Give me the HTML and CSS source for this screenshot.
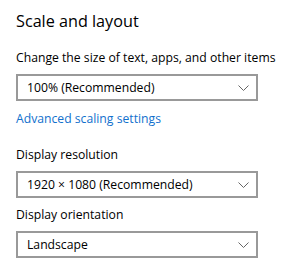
FILE: index.html
```html
<!DOCTYPE html>
<html lang="en">
<head>
  <meta charset="UTF-8">
  <title>Scale and layout</title>
  <link rel="stylesheet" href="styles.css">
</head>
<body>

  <div class="page">
    <h2 class="title">Scale and layout</h2>

    <!-- Text size -->
    <div class="field first">
      <div class="label">Change the size of text, apps, and other items</div>
      <div class="select">
        <span>100% (Recommended)</span>
        <svg class="chevron" width="11" height="6" viewBox="0 0 11 6"><path d="M0.5 0.5 L5.5 5.5 L10.5 0.5" /></svg>
      </div>
    </div>

    <a class="link" href="#">Advanced scaling settings</a>

    <!-- Resolution -->
    <div class="field second">
      <div class="label">Display resolution</div>
      <div class="select">
        <span>1920 × 1080 (Recommended)</span>
        <svg class="chevron" width="11" height="6" viewBox="0 0 11 6"><path d="M0.5 0.5 L5.5 5.5 L10.5 0.5" /></svg>
      </div>
    </div>

    <!-- Orientation -->
    <div class="field third">
      <div class="label">Display orientation</div>
      <div class="select">
        <span>Landscape</span>
        <svg class="chevron" width="11" height="6" viewBox="0 0 11 6"><path d="M0.5 0.5 L5.5 5.5 L10.5 0.5" /></svg>
      </div>
    </div>
  </div>

</body>
</html>
```

FILE: styles.css
```css
body {
  margin: 0;
  padding: 0;
  background-color: #fff;
  font-family: "Open Sans", Arial, sans-serif;
  font-size: 12.2px;
  color: #000;
}

.page {
  padding: 9px 0 0 16px;
}

.title {
  margin: 0;
  font-size: 16.2px;
  font-weight: normal;
  line-height: 24px;
}

.field {
  display: flex;
  flex-direction: column;
  align-items: flex-start;
}

.field.first {
  margin-top: 15px;
}

.field.second {
  margin-top: 16px;
}

.field.third {
  margin-top: 7px;
}

.label {
  line-height: 20px;
  margin-bottom: 6px;
}

.select {
  box-sizing: border-box;
  width: 242px;
  height: 27px;
  border: 2px solid #999;
  display: flex;
  justify-content: space-between;
  align-items: center;
  padding: 0 7px 0 9px;
}

.chevron path {
  fill: none;
  stroke: #666;
  stroke-width: 1;
}

.link {
  display: block;
  margin-top: 8px;
  line-height: 20px;
  color: #1170cd;
  text-decoration: none;
}
```
